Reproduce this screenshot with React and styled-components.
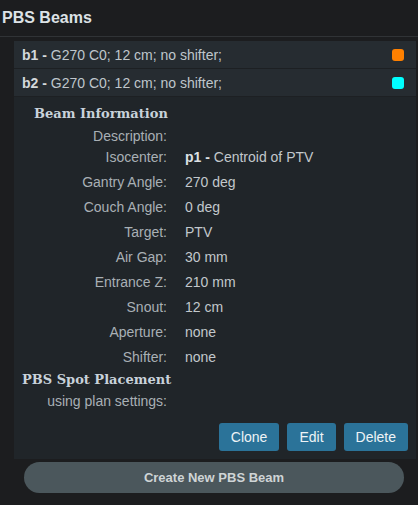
import React from 'react';
import styled, { createGlobalStyle } from 'styled-components';

const GlobalStyle = createGlobalStyle`
    html, body {
        margin: 0;
        padding: 0;
        background: #1c1d1f;
    }
    body {
        font-family: "Liberation Sans", Arial, sans-serif;
        color: #c9cdd0;
    }
`;

const Panel = styled.div`
    width: 418px;
    height: 505px;
    background: #1c1d1f;
    box-sizing: border-box;
    display: flex;
    flex-direction: column;
`;

const Title = styled.h2`
    margin: 0;
    height: 36px;
    line-height: 36px;
    padding-left: 2px;
    font-size: 16px;
    font-weight: bold;
    color: #dde2e6;
    border-bottom: 1px solid #303336;
`;

const BeamList = styled.div`
    margin: 4px 2px 0 14px;
    display: flex;
    flex-direction: column;
`;

const BeamRow = styled.div`
    height: 27px;
    display: flex;
    align-items: center;
    justify-content: space-between;
    padding: 0 12px 0 8px;
    background: #262c31;
    border-bottom: 1px solid #1d2023;
    font-size: 14px;
    color: #bfc6cc;
`;

const BeamName = styled.b`
    color: #d4d8db;
`;

const Swatch = styled.span`
    width: 12px;
    height: 12px;
    border-radius: 3px;
    background: ${p => p.$color};
`;

const Details = styled.div`
    background: #202529;
    padding: 7px 8px 8px 0;
    display: flex;
    flex-direction: column;
`;

const Heading = styled.h3`
    margin: 0;
    height: 20px;
    line-height: 20px;
    padding-left: ${p => p.$indent}px;
    font-family: "DejaVu Serif", "Liberation Serif", Georgia, serif;
    font-size: 13px;
    font-weight: bold;
    color: #c8d2da;
`;

const InfoGrid = styled.div`
    display: grid;
    grid-template-columns: 153px 1fr;
    column-gap: 18px;
    margin-top: ${p => p.$top || 0}px;
`;

const Label = styled.div`
    height: ${p => p.$h || 25}px;
    line-height: ${p => p.$h || 25}px;
    text-align: right;
    font-size: 14px;
    color: #a9b0b5;
    white-space: nowrap;
`;

const Value = styled.div`
    height: ${p => p.$h || 25}px;
    line-height: ${p => p.$h || 25}px;
    font-size: 14px;
    color: #c2c8cc;
    white-space: nowrap;
`;

const Strong = styled.b`
    color: #dde1e4;
`;

const Actions = styled.div`
    display: flex;
    justify-content: flex-end;
    gap: 8px;
    margin-top: 10px;
`;

const ActionButton = styled.button`
    height: 28px;
    padding: 0 ${p => p.$pad || 12}px;
    border: none;
    border-radius: 3px;
    background: #2b7399;
    color: #eef3f6;
    font-family: "Liberation Sans", Arial, sans-serif;
    font-size: 14px;
`;

const CreateButton = styled.button`
    margin: 3px 14px 0 24px;
    height: 31px;
    border: none;
    border-radius: 16px;
    background: #4b575c;
    color: #cfd4d6;
    font-family: "Liberation Sans", Arial, sans-serif;
    font-size: 13px;
    font-weight: bold;
`;

const beams = [
    { name: 'b1', desc: 'G270 C0; 12 cm; no shifter;', color: '#ff8000' },
    { name: 'b2', desc: 'G270 C0; 12 cm; no shifter;', color: '#00ffff' },
];

const info = [
    ['Isocenter:', <><Strong>p1 -</Strong> Centroid of PTV</>],
    ['Gantry Angle:', '270 deg'],
    ['Couch Angle:', '0 deg'],
    ['Target:', 'PTV'],
    ['Air Gap:', '30 mm'],
    ['Entrance Z:', '210 mm'],
    ['Snout:', '12 cm'],
    ['Aperture:', 'none'],
    ['Shifter:', 'none'],
];

const App = () => {
    return (
        <Panel>
            <GlobalStyle />
            <Title>PBS Beams</Title>
            <BeamList>
                {beams.map(b => (
                    <BeamRow key={b.name}>
                        <span><BeamName>{b.name} -</BeamName> {b.desc}</span>
                        <Swatch $color={b.color} />
                    </BeamRow>
                ))}
                <Details>
                    <Heading $indent={20}>Beam Information</Heading>
                    <InfoGrid $top={3}>
                        <Label $h={18}>Description:</Label>
                        <Value $h={18} />
                        {info.map(([label, value]) => (
                            <React.Fragment key={label}>
                                <Label>{label}</Label>
                                <Value>{value}</Value>
                            </React.Fragment>
                        ))}
                    </InfoGrid>
                    <Heading $indent={8}>PBS Spot Placement</Heading>
                    <InfoGrid>
                        <Label $h={23}>using plan settings:</Label>
                        <Value $h={23} />
                    </InfoGrid>
                    <Actions>
                        <ActionButton $pad={12}>Clone</ActionButton>
                        <ActionButton $pad={12}>Edit</ActionButton>
                        <ActionButton $pad={12}>Delete</ActionButton>
                    </Actions>
                </Details>
            </BeamList>
            <CreateButton>Create New PBS Beam</CreateButton>
        </Panel>
    );
};

export default App;
